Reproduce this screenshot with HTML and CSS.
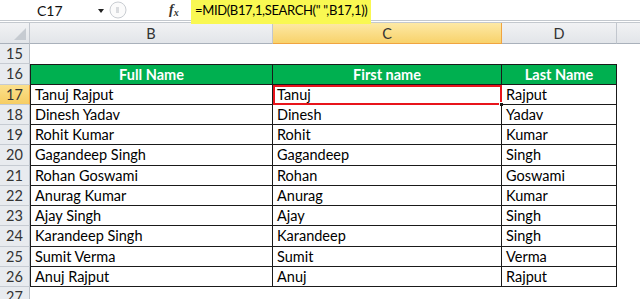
FILE: index.html
```html
<!DOCTYPE html>
<html lang="en">
<head>
  <meta charset="UTF-8" />
  <title>Sheet – Split names</title>
  <link rel="stylesheet" href="styles.css">
</head>
<body>
  <div class="formula-bar">
    <div class="name-box">
      <span class="name-ref">C17</span>
      <span class="name-drop"></span>
    </div>
    <div class="splitter">
      <svg width="18" height="18" viewBox="0 0 18 18">
        <circle cx="9" cy="9" r="8" fill="#fbfbfb" stroke="#c9cdd2" stroke-width="1"/>
        <path d="M7 7h3M7 9h3M7 11h3" stroke="#b8bcc2" stroke-width="1"/>
      </svg>
    </div>
    <div class="fx">f<span class="fx-x">x</span></div>
    <div class="formula">
      <span class="formula-text">=MID(B17,1,SEARCH(" ",B17,1))</span>
    </div>
  </div>

  <div class="sheet">
    <!-- column headers -->
    <div class="col-head corner"><span class="corner-tri"></span></div>
    <div class="col-head">B</div>
    <div class="col-head active">C</div>
    <div class="col-head">D</div>
    <div class="col-head last"></div>

    <div class="row-head">15</div>
    <div class="blank"></div><div class="blank"></div><div class="blank"></div><div class="blank"></div>

    <div class="row-head">16</div>
    <div class="cell th first">Full Name</div>
    <div class="cell th">First name</div>
    <div class="cell th">Last Name</div>
    <div class="blank"></div>

    <div class="row-head active">17</div>
    <div class="cell first">Tanuj Rajput</div>
    <div class="cell selected">Tanuj<span class="fill-handle"></span></div>
    <div class="cell">Rajput</div>
    <div class="blank"></div>

    <div class="row-head">18</div>
    <div class="cell first">Dinesh Yadav</div>
    <div class="cell">Dinesh</div>
    <div class="cell">Yadav</div>
    <div class="blank"></div>

    <div class="row-head">19</div>
    <div class="cell first">Rohit Kumar</div>
    <div class="cell">Rohit</div>
    <div class="cell">Kumar</div>
    <div class="blank"></div>

    <div class="row-head">20</div>
    <div class="cell first">Gagandeep Singh</div>
    <div class="cell">Gagandeep</div>
    <div class="cell">Singh</div>
    <div class="blank"></div>

    <div class="row-head">21</div>
    <div class="cell first">Rohan Goswami</div>
    <div class="cell">Rohan</div>
    <div class="cell">Goswami</div>
    <div class="blank"></div>

    <div class="row-head">22</div>
    <div class="cell first">Anurag Kumar</div>
    <div class="cell">Anurag</div>
    <div class="cell">Kumar</div>
    <div class="blank"></div>

    <div class="row-head">23</div>
    <div class="cell first">Ajay Singh</div>
    <div class="cell">Ajay</div>
    <div class="cell">Singh</div>
    <div class="blank"></div>

    <div class="row-head">24</div>
    <div class="cell first">Karandeep Singh</div>
    <div class="cell">Karandeep</div>
    <div class="cell">Singh</div>
    <div class="blank"></div>

    <div class="row-head">25</div>
    <div class="cell first">Sumit Verma</div>
    <div class="cell">Sumit</div>
    <div class="cell">Verma</div>
    <div class="blank"></div>

    <div class="row-head">26</div>
    <div class="cell first">Anuj Rajput</div>
    <div class="cell">Anuj</div>
    <div class="cell">Rajput</div>
    <div class="blank"></div>

    <div class="row-head partial">27</div>
    <div class="blank"></div><div class="blank"></div><div class="blank"></div><div class="blank"></div>
  </div>
</body>
</html>
```

FILE: styles.css
```css
* {
  box-sizing: border-box;
}
body {
  margin: 0;
  width: 640px;
  height: 299px;
  overflow: hidden;
  background: #fff;
  font-family: "Lato", "Open Sans", sans-serif;
  font-size: 14.5px;
  color: #000;
}

/* Formula bar */
.formula-bar {
  display: flex;
  height: 23px;
  background: #fff;
  border-bottom: 3px double #c3c8ce;
  position: relative;
  z-index: 2;
}
.name-box {
  width: 108px;
  display: flex;
  align-items: center;
  position: relative;
  height: 20px;
}
.name-ref {
  margin-left: 37px;
  font-size: 14px;
  color: #111;
}
.name-drop {
  position: absolute;
  left: 98px;
  top: 9px;
  border-left: 3px solid transparent;
  border-right: 3px solid transparent;
  border-top: 4px solid #222;
}
.splitter {
  width: 61px;
  height: 20px;
  display: flex;
  align-items: center;
  padding-left: 1px;
}
.fx {
  width: 22px;
  height: 20px;
  display: flex;
  align-items: center;
  font-family: "Liberation Serif", serif;
  font-style: italic;
  font-weight: bold;
  font-size: 14px;
  color: #333;
}
.fx-x {
  font-size: 10px;
  margin-top: 4px;
}
.formula {
  flex: 1;
  height: 24px;
}
.formula-text {
  display: inline-block;
  height: 24px;
  padding: 2px 4px 0 4px;
  background: #f9f852;
  font-size: 13px;
  letter-spacing: -0.35px;
  color: #000;
  white-space: pre;
}

/* Sheet grid */
.sheet {
  display: grid;
  grid-template-columns: 30px 243px 229px 115px 23px;
  grid-template-rows: 21px repeat(13, 20.25px);
}
.col-head {
  background: linear-gradient(#f1f2f4, #e2e5e9);
  border-right: 1px solid #c2c7ce;
  border-bottom: 1px solid #a9b1bb;
  display: flex;
  align-items: center;
  justify-content: center;
  color: #333;
  font-size: 14.5px;
}
.col-head.active {
  background: linear-gradient(#fde9a6, #f8d26b);
  border-right: 1px solid #f0a440;
  border-bottom: 1px solid #f0a440;
}
.col-head.last {
  border-right: none;
}
.corner {
  position: relative;
}
.corner-tri {
  position: absolute;
  right: 3px;
  bottom: 3px;
  border-left: 12px solid transparent;
  border-bottom: 12px solid #c6cbd1;
}
.row-head {
  background: #e8ebef;
  border-right: 1px solid #b9bfc7;
  border-bottom: 1px solid #c6cbd2;
  display: flex;
  align-items: center;
  justify-content: center;
  color: #333;
  font-size: 14.5px;
}
.row-head.active {
  background: linear-gradient(#fbe08c, #f6cd63);
  border-right: 1px solid #f0a440;
}
.row-head.partial {
  align-items: flex-start;
  padding-top: 1px;
}
.blank {
  background: #fff;
}
.cell {
  border-right: 1px solid #1a1a1a;
  border-bottom: 1px solid #1a1a1a;
  display: flex;
  align-items: center;
  padding-left: 4px;
  white-space: nowrap;
  position: relative;
}
.cell.first {
  border-left: 1px solid #1a1a1a;
}
.cell.th {
  background: #00b050;
  color: #fff;
  font-weight: bold;
  justify-content: center;
  padding-left: 0;
  border-top: 1px solid #1a1a1a;
}
.cell.selected {
  outline: 2px solid #e8141b;
  outline-offset: -2px;
}
.fill-handle {
  position: absolute;
  right: -3px;
  bottom: -3px;
  width: 5px;
  height: 5px;
  background: #1a1a1a;
  border: 1px solid #fff;
}
```
